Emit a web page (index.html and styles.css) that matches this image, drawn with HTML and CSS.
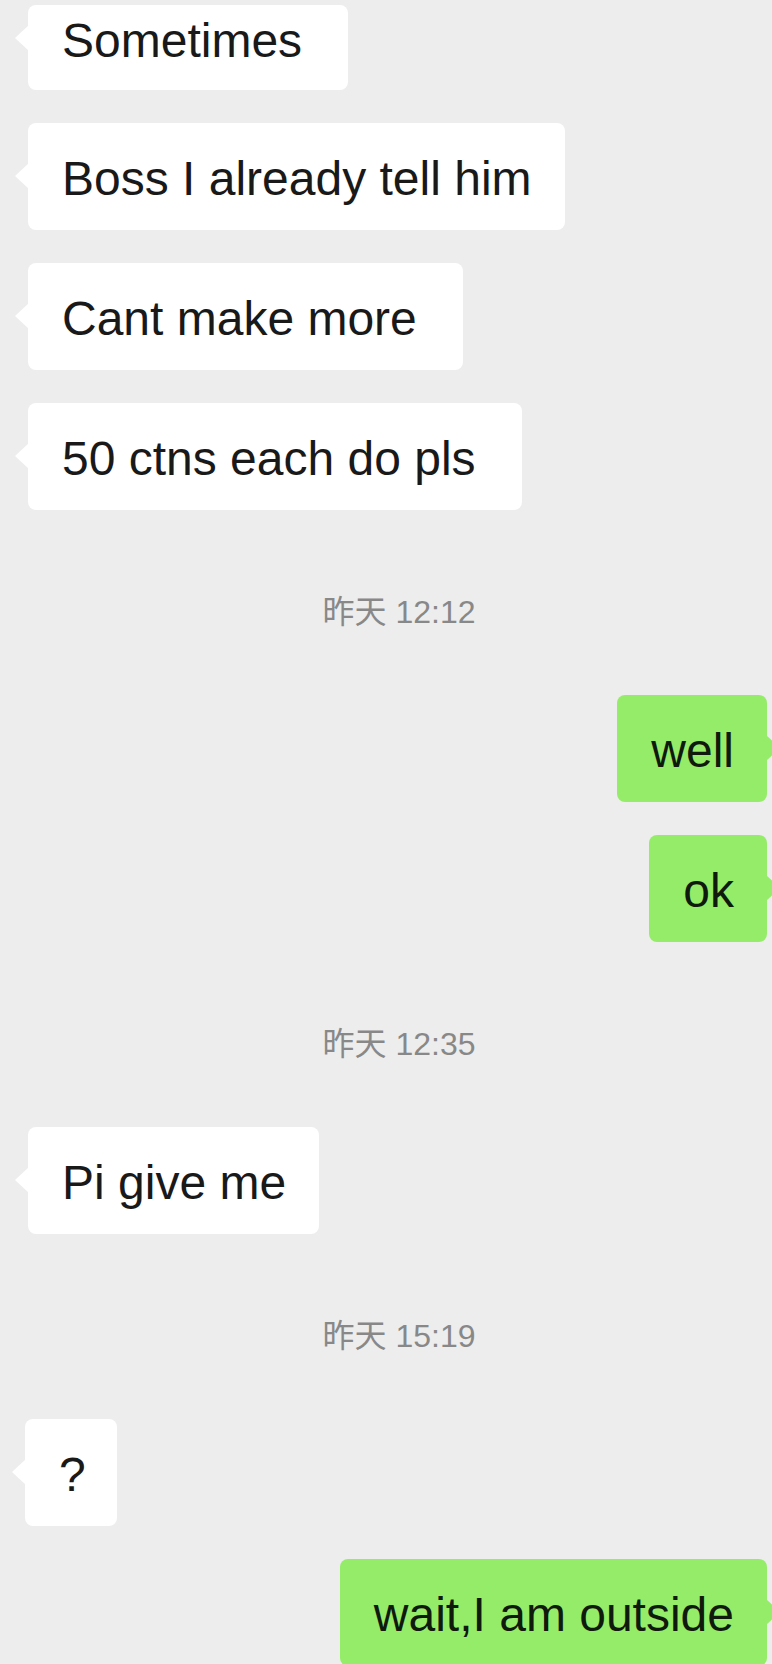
FILE: index.html
```html
<!DOCTYPE html>
<html lang="zh">
<head>
<meta charset="utf-8">
<title>Chat</title>
<link rel="stylesheet" href="styles.css">
</head>
<body>
<main class="chat">
  <div class="bubble other first">Sometimes&nbsp;</div>
  <div class="bubble other">Boss I already tell him</div>
  <div class="bubble other">Cant make more&nbsp;</div>
  <div class="bubble other">50 ctns each do pls&nbsp;</div>
  <div class="stamp">昨天 12:12</div>
  <div class="bubble me">well</div>
  <div class="bubble me">ok</div>
  <div class="stamp">昨天 12:35</div>
  <div class="bubble other">Pi give me</div>
  <div class="stamp">昨天 15:19</div>
  <div class="bubble other short">?</div>
  <div class="bubble me">wait,I am outside</div>
</main>
</body>
</html>
```
FILE: styles.css
```css
html, body {
  margin: 0;
  padding: 0;
  background: #ededed;
  overflow: hidden;
}

body {
  width: 772px;
  height: 1664px;
  font-family: "Liberation Sans", Arial, "Noto Sans CJK SC", sans-serif;
}

.chat {
  display: flex;
  flex-direction: column;
  gap: 33px;
  padding: 5px 5px 0 28px;
}

.bubble {
  position: relative;
  box-sizing: border-box;
  height: 107px;
  padding: 27px 33px 22px 34px;
  font-size: 48px;
  line-height: 58px;
  border-radius: 8px;
  white-space: nowrap;
}

.bubble::before {
  content: "";
  position: absolute;
  top: 40px;
  width: 0;
  height: 0;
  border-top: 13px solid transparent;
  border-bottom: 13px solid transparent;
}

.other {
  align-self: flex-start;
  background: #ffffff;
  color: #191919;
}

.other::before {
  left: -13px;
  border-right: 14px solid #ffffff;
}

.me {
  align-self: flex-end;
  background: #95ec69;
  color: #0f1a0c;
}

.me::before {
  right: -13px;
  border-left: 14px solid #95ec69;
}

.first {
  height: 85px;
  padding-top: 7px;
  padding-bottom: 20px;
}

.first::before {
  top: 20px;
}

.short {
  margin-left: -3px;
  padding-right: 31px;
}

.stamp {
  align-self: stretch;
  margin: 49px 0 30px;
  padding-left: 3px;
  text-align: center;
  font-family: "Liberation Sans", Arial, "Noto Sans CJK SC", sans-serif;
  font-size: 32px;
  line-height: 40px;
  color: #888888;
}
```
